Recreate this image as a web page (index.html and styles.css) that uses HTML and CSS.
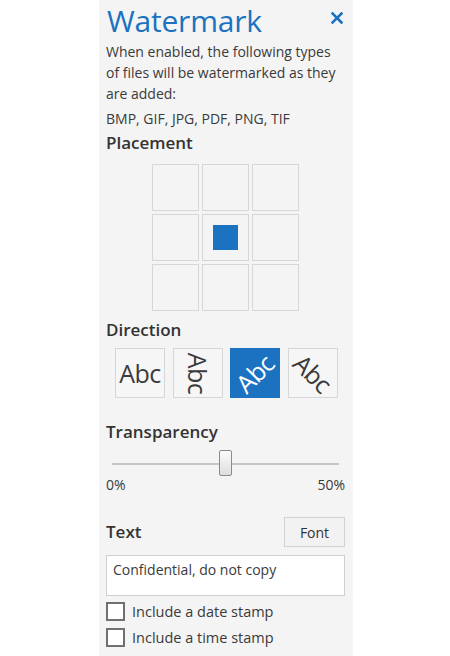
FILE: index.html
```html
<!DOCTYPE html>
<html>
<head>
<meta charset="utf-8">
<link rel="stylesheet" href="styles.css">
</head>
<body>
<div class="panel">
  <div class="title-row">
    <h1 class="title">Watermark</h1>
    <svg class="close" width="12" height="12" viewBox="0 0 12 12"><path d="M1.5 1.5 L10.5 10.5 M10.5 1.5 L1.5 10.5" stroke="#1a72c0" stroke-width="2.6" stroke-linecap="square"/></svg>
  </div>
  <p class="desc">When enabled, the following types of files will be watermarked as they are added:</p>
  <p class="types">BMP, GIF, JPG, PDF, PNG, TIF</p>

  <h2 class="heading">Placement</h2>
  <div class="grid">
    <div class="cell"></div><div class="cell"></div><div class="cell"></div>
    <div class="cell"></div><div class="cell active"><span class="dot"></span></div><div class="cell"></div>
    <div class="cell"></div><div class="cell"></div><div class="cell"></div>
  </div>

  <h2 class="heading dir-heading">Direction</h2>
  <div class="dirs">
    <div class="dir"><span class="abc">Abc</span></div>
    <div class="dir"><span class="abc r90">Abc</span></div>
    <div class="dir selected"><span class="abc rm45">Abc</span></div>
    <div class="dir"><span class="abc r45">Abc</span></div>
  </div>

  <h2 class="heading trans-heading">Transparency</h2>
  <div class="slider">
    <div class="track"></div>
    <div class="thumb"></div>
  </div>
  <div class="scale"><span>0%</span><span>50%</span></div>

  <div class="text-row">
    <h2 class="heading">Text</h2>
    <button class="font-btn">Font</button>
  </div>
  <div class="textbox">Confidential, do not copy</div>
  <label class="check"><span class="box"></span>Include a date stamp</label>
  <label class="check"><span class="box"></span>Include a time stamp</label>
</div>
</body>
</html>
```
FILE: styles.css
```css
html, body {
  margin: 0;
  padding: 0;
  background: #ffffff;
}
body {
  font-family: "Open Sans", "Noto Sans", sans-serif;
  color: #3a3a3a;
}
.panel {
  margin-left: 99px;
  width: 254px;
  height: 656px;
  background: #f4f4f4;
  box-sizing: border-box;
  padding: 0 8px 0 7px;
}
.title-row {
  display: flex;
  justify-content: space-between;
  align-items: flex-start;
  height: 41px;
}
.title {
  margin: 0;
  font-weight: 400;
  font-size: 30px;
  line-height: 41px;
  color: #1a72c0;
  letter-spacing: -0.2px;
  padding-left: 1px;
}
.close {
  margin-top: 12px;
  margin-right: 2px;
}
.desc {
  margin: 0;
  font-size: 14px;
  line-height: 21px;
}
.types {
  margin: 4px 0 0;
  font-size: 14px;
  line-height: 21px;
}
.heading {
  margin: 0;
  font-size: 17px;
  font-weight: 600;
  color: #333;
  line-height: 22px;
}
.types + .heading {
  margin-top: 3px;
}
.grid {
  display: grid;
  grid-template-columns: repeat(3, 47px);
  grid-template-rows: repeat(3, 47px);
  gap: 3px;
  margin: 10px 0 0 46px;
}
.cell {
  border: 1px solid #d6d6d6;
  display: flex;
  align-items: center;
  justify-content: center;
}
.dot {
  width: 25px;
  height: 25px;
  background: #1a72c0;
}
.dir-heading {
  margin-top: 8px;
}
.dirs {
  display: flex;
  gap: 7.5px;
  margin: 7px 0 0 9px;
}
.dir {
  width: 48px;
  height: 48px;
  border: 1px solid #d6d6d6;
  background: #f6f6f6;
  display: flex;
  align-items: center;
  justify-content: center;
  overflow: hidden;
}
.dir.selected {
  background: #1a72c0;
  border-color: #1a72c0;
  color: #fff;
}
.abc {
  font-size: 25px;
  line-height: 1;
  color: #3a3a3a;
  display: inline-block;
  letter-spacing: -0.5px;
}
.selected .abc {
  color: #fff;
}
.r90 { transform: rotate(90deg); }
.rm45 { transform: rotate(-45deg); }
.r45 { transform: rotate(45deg); }
.trans-heading {
  margin-top: 23px;
}
.slider {
  position: relative;
  height: 30px;
  margin: 7px 6px 0 6px;
}
.track {
  position: absolute;
  left: 0;
  right: 0;
  top: 13px;
  height: 2px;
  background: #c6c6c6;
}
.thumb {
  position: absolute;
  left: 107px;
  top: 0;
  width: 11px;
  height: 24px;
  border: 1px solid #8a8a8a;
  border-radius: 2px;
  background: linear-gradient(#fbfbfb, #dedede);
}
.scale {
  display: flex;
  justify-content: space-between;
  font-size: 14px;
  line-height: 20px;
  margin-top: -5px;
}
.text-row {
  display: flex;
  justify-content: space-between;
  align-items: center;
  margin-top: 22px;
}
.font-btn {
  font-family: "Open Sans", "Noto Sans", sans-serif;
  font-size: 14px;
  color: #333;
  background: #f2f2f2;
  border: 1px solid #d2d2d2;
  width: 61px;
  height: 30px;
  padding: 0;
}
.textbox {
  margin-top: 8px;
  background: #fff;
  border: 1px solid #cfcfcf;
  height: 41px;
  box-sizing: border-box;
  padding: 4px 6px;
  font-size: 14px;
  line-height: 20px;
}
.check {
  display: flex;
  align-items: center;
  font-size: 14.5px;
  line-height: 21px;
  margin-top: 5px;
}
.check + .check {
  margin-top: 5px;
}
.box {
  width: 15px;
  height: 15px;
  border: 2px solid #707070;
  background: #fff;
  margin-right: 7px;
  flex: none;
}
```
